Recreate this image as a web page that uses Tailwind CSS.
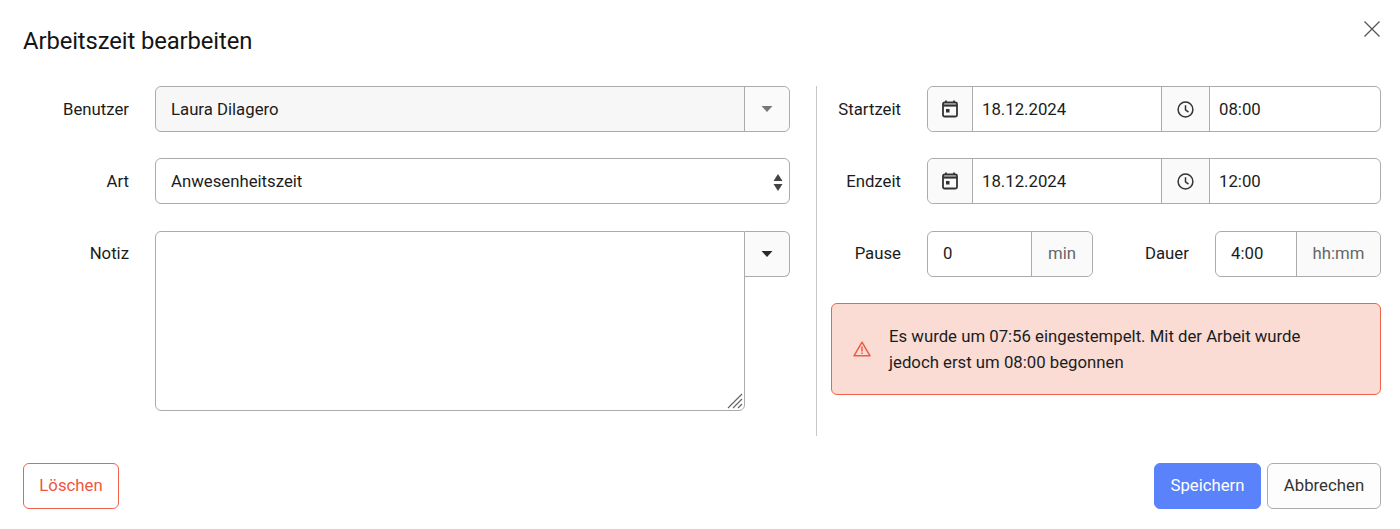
<!DOCTYPE html>
<html lang="de">
<head>
    <meta charset="UTF-8">
    <meta name="viewport" content="width=device-width, initial-scale=1.0">
    <script src="https://cdn.jsdelivr.net/npm/@tailwindcss/browser@4"></script>
    <title>Arbeitszeit bearbeiten</title>
</head>
<body class="bg-white font-['Roboto',sans-serif] text-[16.75px] text-[#1c1c1c]">
    <div class="relative h-[529px] w-[1400px] overflow-hidden pl-[23px] pr-[19px]">
        <!-- Kopf -->
        <header class="flex h-[86px] items-start pt-[25px]">
            <h1 class="text-[23.8px] leading-[32px] tracking-[-0.1px] text-[#141414]">Arbeitszeit bearbeiten</h1>
        </header>
        <button class="absolute left-[1364px] top-[21px]">
            <svg width="16" height="16" viewBox="0 0 16 16" fill="none" stroke="#555" stroke-width="1.3"><path d="M0.5 0.5 15.5 15.5M15.5 0.5 0.5 15.5"/></svg>
        </button>

        <main class="flex h-[350px]">
            <!-- Linke Spalte -->
            <div class="flex w-[767px] flex-col">
                <div class="flex items-center">
                    <label class="w-[106px] pt-[2px] text-right">Benutzer</label>
                    <div class="ml-[26px] flex h-[46px] w-[635px] rounded-[6px] border border-[#ababab] bg-[#f7f7f7]">
                        <div class="flex flex-1 items-center pl-[15px] pt-[2px]">Laura Dilagero</div>
                        <div class="flex w-[45px] items-center justify-center rounded-r-[6px] border-l border-[#ababab] bg-[#fafafa]">
                            <svg width="12" height="6" viewBox="0 0 12 6"><path d="M0.5 0H11.5L6 6Z" fill="#777"/></svg>
                        </div>
                    </div>
                </div>
                <div class="mt-[26px] flex items-center">
                    <label class="w-[106px] pt-[2px] text-right">Art</label>
                    <div class="ml-[26px] flex h-[46px] w-[635px] items-center justify-between rounded-[6px] border border-[#ababab] pl-[15px] pr-[6px] pt-[2px]">
                        <span>Anwesenheitszeit</span>
                        <svg width="10" height="17" viewBox="0 0 10 17" fill="#444"><path d="M5 0 9.5 7H0.5Z"/><path d="M0.5 10H9.5L5 17Z"/></svg>
                    </div>
                </div>
                <div class="mt-[27px] flex items-start">
                    <label class="w-[106px] pt-[10px] text-right">Notiz</label>
                    <div class="relative ml-[26px] h-[180px] w-[590px] rounded-l-[6px] rounded-br-[6px] border border-[#ababab]">
                        <svg class="absolute bottom-[1px] right-[1px]" width="16" height="16" viewBox="0 0 16 16" stroke="#666" stroke-width="1.2"><path d="M1 15 15 1M6 15 15 6M11 15 15 11"/></svg>
                    </div>
                    <div class="flex h-[46px] w-[45px] items-center justify-center rounded-r-[6px] border border-l-0 border-[#ababab] bg-[#fafafa]">
                        <svg width="12" height="6" viewBox="0 0 12 6"><path d="M0.5 0H11.5L6 6Z" fill="#2a2a2a"/></svg>
                    </div>
                </div>
            </div>

            <div class="ml-[26px] w-px bg-[#c8c8c8]"></div>

            <!-- Rechte Spalte -->
            <div class="ml-[11px] flex w-[553px] flex-col">
                <div class="flex items-center">
                    <label class="w-[73px] pt-[2px] text-right">Startzeit</label>
                    <div class="ml-[26px] flex h-[46px] w-[454px] rounded-[6px] border border-[#ababab]">
                        <div class="flex w-[45px] items-center justify-center rounded-l-[6px] border-r border-[#ababab] bg-[#fafafa]">
                            <svg width="16" height="18" viewBox="0 0 16 18" fill="none"><path d="M4 0.5V3M12 0.5V3" stroke="#333" stroke-width="1.8"/><rect x="1" y="2.5" width="14" height="14" rx="1.5" stroke="#333" stroke-width="1.8"/><path d="M1 5.5H15" stroke="#333" stroke-width="2.2"/><rect x="4" y="9" width="3.5" height="3.5" fill="#333"/></svg>
                        </div>
                        <div class="flex w-[188px] items-center pl-[9px] pt-[2px]">18.12.2024</div>
                        <div class="flex w-[49px] items-center justify-center border-x border-[#ababab] bg-[#fafafa]">
                            <svg width="17" height="17" viewBox="0 0 17 17" fill="none" stroke="#333" stroke-width="1.5"><circle cx="8.5" cy="8.5" r="7.4"/><path d="M8.5 4.2V8.8L11.5 11.2"/></svg>
                        </div>
                        <div class="flex flex-1 items-center pl-[9px] pt-[2px]">08:00</div>
                    </div>
                </div>
                <div class="mt-[26px] flex items-center">
                    <label class="w-[73px] pt-[2px] text-right">Endzeit</label>
                    <div class="ml-[26px] flex h-[46px] w-[454px] rounded-[6px] border border-[#ababab]">
                        <div class="flex w-[45px] items-center justify-center rounded-l-[6px] border-r border-[#ababab] bg-[#fafafa]">
                            <svg width="16" height="18" viewBox="0 0 16 18" fill="none"><path d="M4 0.5V3M12 0.5V3" stroke="#333" stroke-width="1.8"/><rect x="1" y="2.5" width="14" height="14" rx="1.5" stroke="#333" stroke-width="1.8"/><path d="M1 5.5H15" stroke="#333" stroke-width="2.2"/><rect x="4" y="9" width="3.5" height="3.5" fill="#333"/></svg>
                        </div>
                        <div class="flex w-[188px] items-center pl-[9px] pt-[2px]">18.12.2024</div>
                        <div class="flex w-[49px] items-center justify-center border-x border-[#ababab] bg-[#fafafa]">
                            <svg width="17" height="17" viewBox="0 0 17 17" fill="none" stroke="#333" stroke-width="1.5"><circle cx="8.5" cy="8.5" r="7.4"/><path d="M8.5 4.2V8.8L11.5 11.2"/></svg>
                        </div>
                        <div class="flex flex-1 items-center pl-[9px] pt-[2px]">12:00</div>
                    </div>
                </div>
                <div class="mt-[27px] flex items-center">
                    <label class="w-[73px] text-right">Pause</label>
                    <div class="ml-[26px] flex h-[46px] w-[166px] rounded-[6px] border border-[#ababab]">
                        <div class="flex flex-1 items-center pl-[15px]">0</div>
                        <div class="flex w-[61px] items-center justify-center rounded-r-[6px] border-l border-[#ababab] bg-[#fafafa] text-[#666]">min</div>
                    </div>
                    <label class="ml-[52px] w-[45px]">Dauer</label>
                    <div class="ml-[25px] flex h-[46px] w-[166px] rounded-[6px] border border-[#ababab]">
                        <div class="flex w-[80px] items-center pl-[15px]">4:00</div>
                        <div class="flex flex-1 items-center justify-center rounded-r-[6px] border-l border-[#ababab] bg-[#fafafa] text-[#666]">hh:mm</div>
                    </div>
                </div>
                <div class="ml-[3px] mt-[26px] flex h-[92px] w-[550px] items-center rounded-[6px] border border-[#f0624c] bg-[#fadcd5] pl-[21px]">
                    <svg width="18" height="16" viewBox="0 0 18 16" fill="none" class="shrink-0"><path d="M9 1.2 17 14.8H1Z" stroke="#ee5a44" stroke-width="1.5" stroke-linejoin="round"/><path d="M9 5.5V10.5M9 11.5V13" stroke="#ee5a44" stroke-width="1.5"/></svg>
                    <p class="ml-[18px] leading-[26px]">Es wurde um 07:56 eingestempelt. Mit der Arbeit wurde<br>jedoch erst um 08:00 begonnen</p>
                </div>
            </div>
        </main>

        <!-- Fuss -->
        <footer class="mt-[27px] flex items-center justify-between">
            <button class="h-[46px] w-[96px] rounded-[6px] border border-[#f0624c] font-[450] text-[#f0563e]">Löschen</button>
            <div class="flex gap-[6px]">
                <button class="h-[46px] w-[107px] rounded-[6px] border border-[#5a82fb] bg-[#5a82fb] text-white">Speichern</button>
                <button class="h-[46px] w-[114px] rounded-[6px] border border-[#ababab] bg-[#fdfdfd] text-[#333]">Abbrechen</button>
            </div>
        </footer>
    </div>
</body>
</html>
